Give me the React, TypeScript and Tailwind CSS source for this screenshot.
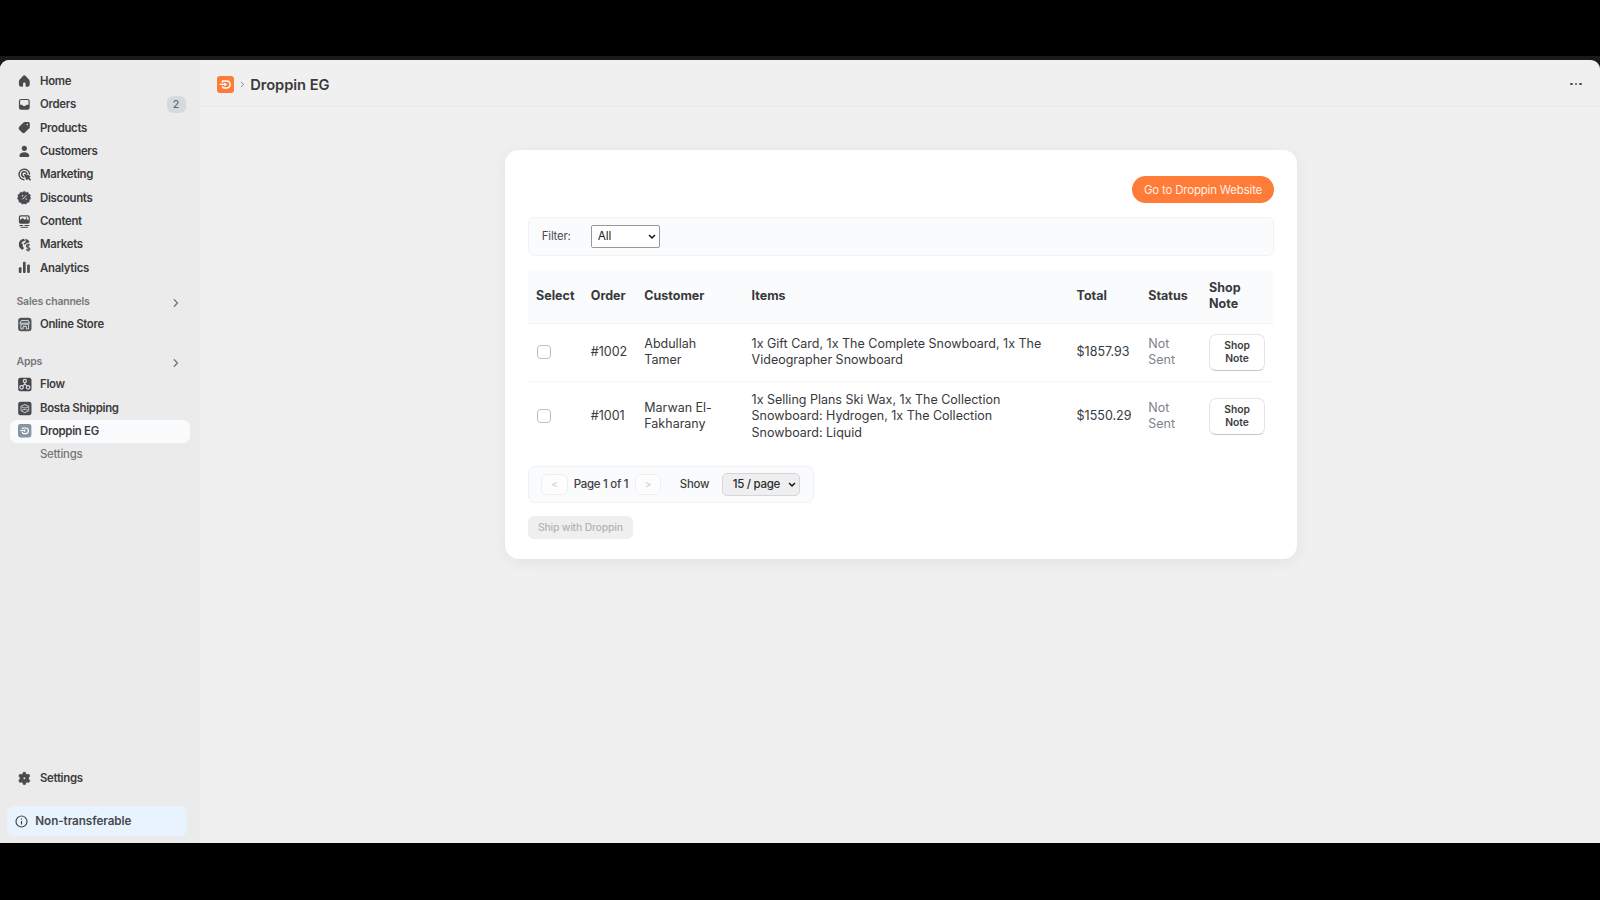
import { useState } from "react";
import type { ReactNode } from "react";

type Order = {
  id: string;
  customer: string;
  items: string;
  total: string;
  status: string;
};

const orders: Order[] = [
  {
    id: "#1002",
    customer: "Abdullah Tamer",
    items: "1x Gift Card, 1x The Complete Snowboard, 1x The Videographer Snowboard",
    total: "$1857.93",
    status: "Not Sent",
  },
  {
    id: "#1001",
    customer: "Marwan El-Fakharany",
    items: "1x Selling Plans Ski Wax, 1x The Collection Snowboard: Hydrogen, 1x The Collection Snowboard: Liquid",
    total: "$1550.29",
    status: "Not Sent",
  },
];

function Icon({ children }: { children: ReactNode }) {
  return (
    <svg viewBox="0 0 20 20" className="size-[16.67px] shrink-0" fill="#4a4a4f">
      {children}
    </svg>
  );
}

const HomeIcon = () => (
  <Icon>
    <path d="M8.344 3.692a2.25 2.25 0 0 1 3.312 0l3.854 4.19a3.75 3.75 0 0 1 .99 2.538v3.33a2.75 2.75 0 0 1-2.75 2.75h-1.25a1 1 0 0 1-1-1v-2.5a1.5 1.5 0 0 0-3 0v2.5a1 1 0 0 1-1 1h-1.25a2.75 2.75 0 0 1-2.75-2.75v-3.33c0-.94.353-1.847.99-2.539l3.854-4.189Z" />
  </Icon>
);

const OrdersIcon = () => (
  <Icon>
    <path
      fillRule="evenodd"
      d="M6.25 3.5a2.75 2.75 0 0 0-2.75 2.75v7.5a2.75 2.75 0 0 0 2.75 2.75h7.5a2.75 2.75 0 0 0 2.75-2.75v-7.5a2.75 2.75 0 0 0-2.75-2.75h-7.5Zm-1.35 3c0-.9.6-1.6 1.5-1.6h7.2c.9 0 1.5.7 1.5 1.6v4h-2.2c-.45 0-.85.25-1.05.65l-.2.45a1 1 0 0 1-.9.55H9.25a1 1 0 0 1-.9-.55l-.2-.45a1.2 1.2 0 0 0-1.05-.65H4.9v-4Z"
    />
  </Icon>
);

const ProductsIcon = () => (
  <Icon>
    <path
      fillRule="evenodd"
      d="M10.9 3.5a3.2 3.2 0 0 0-2.2.9L4.1 9a2.9 2.9 0 0 0 0 4.1l2.9 2.9a2.9 2.9 0 0 0 4.1 0l4.6-4.6a3.2 3.2 0 0 0 .9-2.2V5.4c0-1.05-.85-1.9-1.9-1.9h-3.8Zm2.7 4a.9.9 0 1 0 0-1.8.9.9 0 0 0 0 1.8Z"
    />
  </Icon>
);

const CustomersIcon = () => (
  <Icon>
    <circle cx="10" cy="6.4" r="3.1" />
    <path d="M10 11c-3.3 0-6 1.9-6 4.3 0 .8.6 1.4 1.4 1.4h9.2c.8 0 1.4-.6 1.4-1.4C16 12.9 13.3 11 10 11Z" />
  </Icon>
);

const MarketingIcon = () => (
  <Icon>
    <g fill="none" stroke="#4a4a4f" strokeWidth="1.8" strokeLinecap="round">
      <path d="M16.2 9.5a6.3 6.3 0 1 0-6.7 6.9" />
      <path d="M13 9.3a3.1 3.1 0 1 0-3.5 3.8" />
    </g>
    <path d="M9.7 10.6c-.3-.7.3-1.3 1-1l6 2.2c.8.3.8 1.4 0 1.7l-.9.4 1.7 1.7c.5.5.5 1.1.1 1.5s-1.1.4-1.5-.1l-1.7-1.7-.5 1c-.3.7-1.4.7-1.7-.1l-2.5-5.6Z" />
  </Icon>
);

const DiscountsIcon = () => (
  <Icon>
    <path
      d="m10 2.6 1.9 1.5 2.4-.3.8 2.3 2.2 1-.5 2.4 1 2.2-1.9 1.6-.2 2.4-2.4.5-1.4 2-2.2-.9-2.3.9-1.4-2-2.4-.5-.2-2.4-1.7-1.7 1-2.2-.5-2.3 2.2-1 .8-2.3 2.4.3L10 2.6Z"
      stroke="#4a4a4f"
      strokeWidth=".6"
      strokeLinejoin="round"
    />
    <path d="m7.8 12.2 4.4-4.4" stroke="#ebebeb" strokeWidth="1.2" strokeLinecap="round" />
    <circle cx="7.8" cy="8" r=".9" fill="#ebebeb" />
    <circle cx="12.2" cy="12.1" r=".9" fill="#ebebeb" />
  </Icon>
);

const ContentIcon = () => (
  <Icon>
    <path
      fillRule="evenodd"
      d="M5.7 2.8h8.6a2.3 2.3 0 0 1 2.3 2.3v5.5a2.3 2.3 0 0 1-2.3 2.3H5.7a2.3 2.3 0 0 1-2.3-2.3V5.1a2.3 2.3 0 0 1 2.3-2.3ZM4.9 8.4l2.2-1.7c.5-.4 1.2-.4 1.7 0l1.7 1.4 1-.7c.6-.4 1.3-.4 1.8.1l1.8 1.6V5.3c0-.6-.4-1-1-1H5.9c-.6 0-1 .4-1 1v3.1Z"
    />
    <circle cx="12.5" cy="5.9" r=".9" />
    <path d="M4 15h4.5M10.2 15H16M5.5 17.2h9" stroke="#4a4a4f" strokeWidth="1.2" />
  </Icon>
);

const MarketsIcon = () => (
  <Icon>
    <path d="M9.8 3.2a6.8 6.8 0 0 0-1.5 13.3l1-2.5-1.6-1.6.6-2.1-2-1.5L8 6.6l2.7-.5-.9-2.9Z" />
    <path d="M5 6.5 3.6 9l.6 4 4.1 3.3.8-2.3-1.7-1.8.7-2.1-2.4-1.3L5 6.5Z" />
    <path d="M11.4 3.4c2.3.4 4.2 2 5 4.2l-2.5.5-2.3 1.3-1.4 1-1.2-1.8 2.6-1.2-.2-4Z" />
    <path
      d="M16.6 11.3c-.6-.7-1.4-.9-2.2-.9-1.2 0-2 .6-2 1.6 0 2.3 4.3 1.2 4.3 3.5 0 1-.9 1.7-2.2 1.7-.9 0-1.8-.4-2.3-1.1M14.5 9v9.6"
      fill="none"
      stroke="#4a4a4f"
      strokeWidth="1.3"
    />
  </Icon>
);

const AnalyticsIcon = () => (
  <Icon>
    <rect x="3.4" y="10" width="3.2" height="6.8" rx="1.2" />
    <rect x="8.4" y="3.2" width="3.2" height="13.6" rx="1.2" />
    <rect x="13.4" y="6.6" width="3.2" height="10.2" rx="1.2" />
  </Icon>
);

const StoreIcon = () => (
  <Icon>
    <rect x="2.6" y="2.2" width="16" height="16" rx="3.6" fill="#4f5459" />
    <g fill="none" stroke="#d5dadf" strokeWidth="1.2">
      <path d="M6.2 5.5h8.6l1.2 3.3c0 2.3-2.6 2.3-2.9.4-.3 1.9-2.5 1.9-2.7 0-.2 1.9-2.4 1.9-2.7 0-.3 1.9-2.9 1.9-2.9-.4l1.4-3.3ZM5.1 8.6H16M5.9 11v4.6h2.7v-3h3.8v3h2.7V11" />
    </g>
  </Icon>
);

const FlowIcon = () => (
  <Icon>
    <rect x="2.6" y="2.2" width="16" height="16" rx="3" fill="#46464a" />
    <g fill="none" stroke="#dcdfe2" strokeWidth="1.4">
      <circle cx="10.6" cy="5.9" r="1.9" />
      <circle cx="6.7" cy="13.6" r="2.1" />
      <circle cx="14.5" cy="13.6" r="2.1" />
      <path d="M10.6 7.8v2M10.6 9.6 8 11.8M10.6 9.6l2.6 2.2" />
    </g>
  </Icon>
);

const BostaIcon = () => (
  <Icon>
    <rect x="2.6" y="2.2" width="16" height="16" rx="3" fill="#4a4c50" />
    <g fill="none" stroke="#b3bbc3" strokeWidth="1.3">
      <path d="m10.6 5.4 4.6 2.3v5.2l-4.6 2.3L6 12.9V7.7l4.6-2.3Z" />
      <path d="M7 8.6c2.3 1.1 4.9 1.1 7.2 0M7 12.2c2.3-1.1 4.9-1.1 7.2 0" />
    </g>
  </Icon>
);

const GearIcon = () => (
  <Icon>
    <path
      fillRule="evenodd"
      d="M8.8 2.8h2.4l.6 2.2 1.3.7 2.2-.6 1.3 2.2-1.5 1.7v2l1.5 1.7-1.3 2.2-2.2-.6-1.3.8-.6 2.2H8.8l-.6-2.2-1.3-.8-2.2.6-1.3-2.2L4.9 11V9L3.4 7.3l1.3-2.2 2.2.6L8.2 5l.6-2.2ZM10 11.5a1.5 1.5 0 1 0 0-3 1.5 1.5 0 0 0 0 3Z"
      stroke="#4a4a4f"
      strokeWidth="1"
      strokeLinejoin="round"
    />
  </Icon>
);

function DroppinLogo({ className, bg }: { className: string; bg: string }) {
  return (
    <svg viewBox="0 0 16 16" className={className} fill="none">
      <rect width="16" height="16" rx="2.8" fill={bg} />
      <path
        d="M5.2 5.6v-.8h3.9a3.3 3.3 0 0 1 0 6.6H6.6c-.9 0-1.3-.6-1.4-1.4"
        stroke="#fff"
        strokeWidth="1.4"
        strokeLinecap="round"
        strokeLinejoin="round"
      />
      <path d="M2.9 7.9h5.3M7.4 6.9l1.2 1-1.2 1.1" stroke="#fff" strokeWidth="1.1" strokeLinecap="round" />
    </svg>
  );
}

function Chevron({ className }: { className: string }) {
  return (
    <svg
      viewBox="0 0 10 10"
      className={className}
      fill="none"
      stroke="currentColor"
      strokeWidth="1.4"
      strokeLinecap="round"
      strokeLinejoin="round"
    >
      <path d="m3.3 1.8 3.2 3.2-3.2 3.2" />
    </svg>
  );
}

function SelectArrow() {
  return (
    <svg
      viewBox="0 0 8 6"
      className="pointer-events-none absolute top-[9px] right-[4px] h-[5.5px] w-[8px]"
      fill="none"
      stroke="#111"
      strokeWidth="1.6"
    >
      <path d="m.8 1.2 3.2 3.2 3.2-3.2" />
    </svg>
  );
}

function NavItem({ icon, label, badge, active }: { icon?: ReactNode; label: string; badge?: string; active?: boolean }) {
  return (
    <div
      className={
        active
          ? "flex h-[23.33px] items-center rounded-[7px] bg-[#fafbfd] pr-[4px] pl-[6.3px]"
          : "flex h-[23.33px] items-center pr-[4px] pl-[6.3px]"
      }
    >
      <span className="flex w-[23.7px] shrink-0">{icon}</span>
      <span
        className={
          icon
            ? "pt-[1px] text-[11.4px] font-semibold tracking-[-0.3px] text-[#3c3c3f]"
            : "pt-[1px] text-[11.4px] font-medium tracking-[-0.26px] text-[#75757a]"
        }
      >
        {label}
      </span>
      {badge && (
        <span className="ml-auto flex h-[17px] w-[19px] items-center justify-center rounded-[6px] bg-[#d5dadf] text-[10.5px] font-medium text-[#616468]">
          {badge}
        </span>
      )}
    </div>
  );
}

function NavHeading({ label }: { label: string }) {
  return (
    <div className="flex h-[23px] items-center justify-between pr-[8.5px] pl-[6.5px]">
      <span className="pt-[0.5px] text-[10.5px] font-semibold tracking-[-0.23px] text-[#77777b]">{label}</span>
      <Chevron className="mt-[2.5px] size-[10px] text-[#6d7b88]" />
    </div>
  );
}

function Sidebar() {
  return (
    <aside className="flex w-[200px] shrink-0 flex-col bg-[#ebebeb] pt-[9.9px]">
      <nav className="mr-[10.5px] ml-[10px]">
        <NavItem icon={<HomeIcon />} label="Home" />
        <NavItem icon={<OrdersIcon />} label="Orders" badge="2" />
        <NavItem icon={<ProductsIcon />} label="Products" />
        <NavItem icon={<CustomersIcon />} label="Customers" />
        <NavItem icon={<MarketingIcon />} label="Marketing" />
        <NavItem icon={<DiscountsIcon />} label="Discounts" />
        <NavItem icon={<ContentIcon />} label="Content" />
        <NavItem icon={<MarketsIcon />} label="Markets" />
        <NavItem icon={<AnalyticsIcon />} label="Analytics" />

        <div className="mt-[10.5px]">
          <NavHeading label="Sales channels" />
          <NavItem icon={<StoreIcon />} label="Online Store" />
        </div>

        <div className="mt-[13.7px]">
          <NavHeading label="Apps" />
          <NavItem icon={<FlowIcon />} label="Flow" />
          <NavItem icon={<BostaIcon />} label="Bosta Shipping" />
          <NavItem icon={<DroppinLogo className="ml-[2.2px] size-[13.4px]" bg="#8795a3" />} label="Droppin EG" active />
          <NavItem label="Settings" />
        </div>
      </nav>

      <div className="mt-auto mr-[10px] ml-[10px]">
        <NavItem icon={<GearIcon />} label="Settings" />
      </div>
      <div className="mt-[16.3px] mr-[13px] mb-[7px] ml-[7px] flex h-[30px] items-center gap-[7px] rounded-[7px] bg-[#e9f3fe] pl-[8.3px]">
        <svg viewBox="0 0 13 13" className="size-[13px]" fill="none" stroke="#45494e" strokeWidth="1.2">
          <circle cx="6.5" cy="6.5" r="5.5" />
          <path d="M6.5 5.9v3.6M6.5 3.5v1.2" />
        </svg>
        <span className="pt-[1px] text-[11.7px] font-semibold tracking-[-0.07px] text-[#45494e]">Non-transferable</span>
      </div>
    </aside>
  );
}

function OrdersTable() {
  const cell = "px-[8.3px] align-middle text-left";

  return (
    <table className="w-[745px] table-fixed border-collapse text-[12.5px] leading-[16.5px] text-[#38393c]">
      <colgroup>
        <col className="w-[54.7px]" />
        <col className="w-[53.5px]" />
        <col className="w-[107.3px]" />
        <col className="w-[325px]" />
        <col className="w-[71.7px]" />
        <col className="w-[60.8px]" />
        <col className="w-[72px]" />
      </colgroup>
      <thead>
        <tr className="h-[54px] border-b border-[#eff1f4] bg-[#fafbfd] font-semibold">
          <th className={cell}>Select</th>
          <th className={cell}>Order</th>
          <th className={cell}>Customer</th>
          <th className={cell}>Items</th>
          <th className={cell}>Total</th>
          <th className={cell}>Status</th>
          <th className={cell}>Shop Note</th>
        </tr>
      </thead>
      <tbody>
        {orders.map((order, i) => (
          <tr key={order.id} className={i === 0 ? "h-[57.5px] border-b border-[#f6f6f7]" : "h-[70px]"}>
            <td className={cell}>
              <input
                type="checkbox"
                className="ml-[1px] block size-[14px] appearance-none rounded-[4px] border border-[#b9bcc2] bg-white"
              />
            </td>
            <td className={cell}>{order.id}</td>
            <td className={cell}>{order.customer}</td>
            <td className={cell}>{order.items}</td>
            <td className={cell}>{order.total}</td>
            <td className="px-[8.3px] text-left align-middle text-[#7d838b]">{order.status}</td>
            <td className={cell}>
              <button className="block h-[37px] w-[56px] rounded-[7px] border border-b-[1.5px] border-[#e3e4e6] border-b-[#c3c8cd] bg-white px-[10px] text-[10.3px] leading-[13.3px] font-semibold text-[#3c3d40]">
                Shop Note
              </button>
            </td>
          </tr>
        ))}
      </tbody>
    </table>
  );
}

export default function App() {
  const [filter, setFilter] = useState("All");
  const [pageSize, setPageSize] = useState("15");

  return (
    <div className="flex h-[900px] w-[1600px] flex-col bg-black font-['Inter',sans-serif]">
      <div className="mt-[56px] flex h-[787px] flex-col bg-[#1a1a1a] pt-[3.5px]">
        <div className="flex min-h-0 flex-1 overflow-hidden rounded-t-[9px] bg-[#f0f0f0]">
          <Sidebar />

          <main className="flex flex-1 flex-col">
            <header className="flex h-[47px] items-center border-b border-[#e8e8e8] pt-[3px] pr-[18px] pl-[16.5px]">
              <DroppinLogo className="size-[17px]" bg="#ff7b38" />
              <Chevron className="mt-[1px] ml-[5px] size-[7px] text-[#7d8894]" />
              <h1 className="ml-[4.7px] pt-[1.5px] text-[14.7px] font-semibold tracking-[-0.06px] text-[#3a3a3d]">
                Droppin EG
              </h1>
              <div className="ml-auto flex gap-[1.8px]">
                <span className="size-[2.8px] rounded-full bg-[#4a4f57]" />
                <span className="size-[2.8px] rounded-full bg-[#4a4f57]" />
                <span className="size-[2.8px] rounded-full bg-[#4a4f57]" />
              </div>
            </header>

            <section className="mt-[43.2px] ml-[304.8px] flex h-[409.3px] w-[792px] flex-col rounded-[14px] bg-white px-[23px] pt-[26.5px] shadow-[0_3px_16px_rgba(0,0,0,0.06)]">
              <button className="h-[27.3px] w-[141.5px] self-end rounded-full bg-[#ff7b38] pt-[1px] text-[11.4px] tracking-[-0.15px] text-[#fff1e9]">
                Go to Droppin Website
              </button>

              <div className="mt-[13.2px] flex h-[39.5px] shrink-0 items-center rounded-[6px] border border-[#f0f2f5] bg-[#fafbfd] pl-[13px]">
                <label className="w-[49px] pt-[1px] text-[11.4px] tracking-[-0.2px] text-[#4a4a4e]">Filter:</label>
                <div className="relative">
                  <select
                    value={filter}
                    onChange={(e) => setFilter(e.target.value)}
                    className="block h-[22.5px] w-[69px] appearance-none rounded-[2px] border border-[#96989b] bg-white pt-[1px] pl-[6px] text-[11.8px] tracking-[-0.1px] text-[#222]"
                  >
                    <option>All</option>
                    <option>Sent</option>
                    <option>Not Sent</option>
                  </select>
                  <SelectArrow />
                </div>
              </div>

              <div className="mt-[13.5px]">
                <OrdersTable />
              </div>

              <div className="mt-[15px] flex h-[37px] w-[286px] shrink-0 items-center rounded-[7px] border border-[#eff1f4] bg-[#fafbfd] pl-[12.3px] text-[11.4px] tracking-[-0.25px] text-[#3f4043]">
                <button disabled className="h-[21.5px] w-[26.5px] rounded-[6px] border border-[#eeeff1] bg-[#fdfdfe] text-[10px] text-[#c9cbce]">
                  &lt;
                </button>
                <span className="ml-[6.2px] w-[61px] font-medium whitespace-nowrap">Page 1 of 1</span>
                <button disabled className="h-[21.5px] w-[26.5px] rounded-[6px] border border-[#eeeff1] bg-[#fdfdfe] text-[10px] text-[#c9cbce]">
                  &gt;
                </button>
                <span className="ml-[18.5px] w-[42px] font-medium">Show</span>
                <div className="relative">
                  <select
                    value={pageSize}
                    onChange={(e) => setPageSize(e.target.value)}
                    className="block h-[22.5px] w-[78px] appearance-none rounded-[5px] border border-[#d3d6da] bg-[#efefef] pl-[10px] text-[11.5px] font-medium tracking-[-0.3px] text-[#2b2b2e]"
                  >
                    <option value="15">15 / page</option>
                    <option value="30">30 / page</option>
                    <option value="50">50 / page</option>
                  </select>
                  <SelectArrow />
                </div>
              </div>

              <button
                disabled
                className="mt-[13px] h-[23px] w-[105px] shrink-0 rounded-[6px] bg-[#efefef] text-[10.4px] font-medium tracking-[-0.18px] text-[#b4b4b6]"
              >
                Ship with Droppin
              </button>
            </section>
          </main>
        </div>
      </div>
    </div>
  );
}
